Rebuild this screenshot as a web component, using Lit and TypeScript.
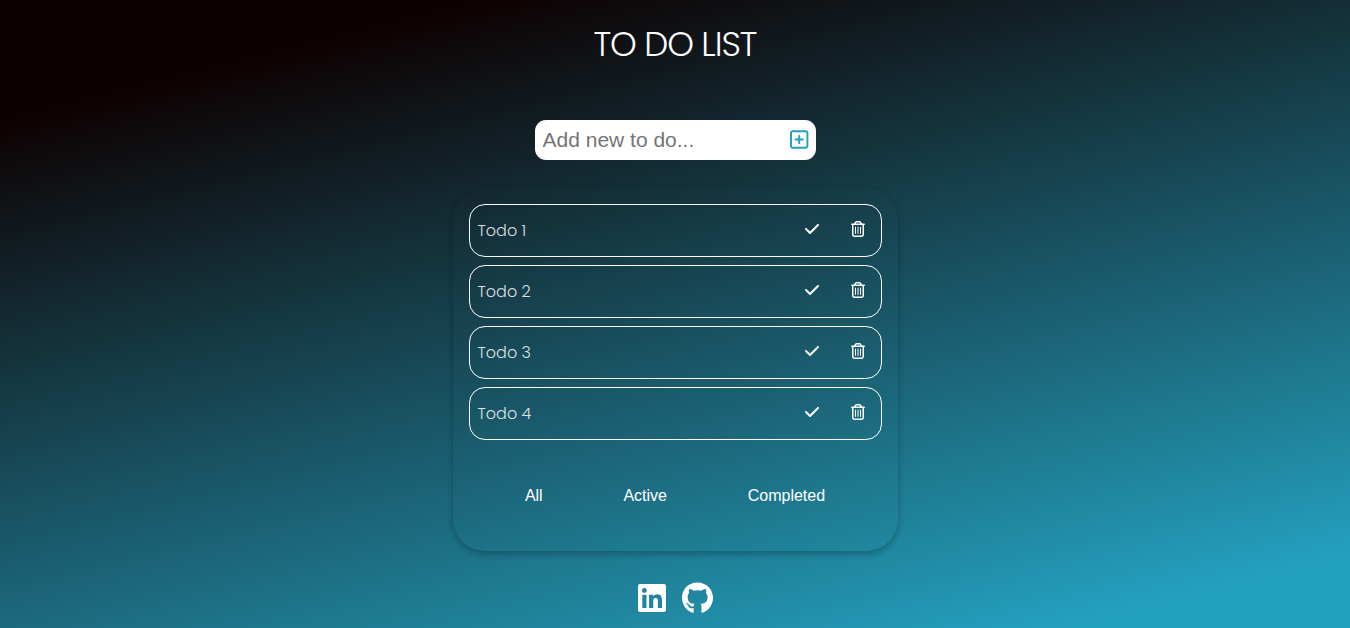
import { LitElement, html, css, svg } from "lit";
import { customElement, state } from "lit/decorators.js";

const icon = (width: number, path: string) => html`
  <svg class="icon" viewBox="0 0 ${width} 512" aria-hidden="true">${svg`<path d=${path}></path>`}</svg>
`;

const PLUS =
  "M64 80c-8.8 0-16 7.2-16 16V416c0 8.8 7.2 16 16 16H384c8.8 0 16-7.2 16-16V96c0-8.8-7.2-16-16-16H64zM0 96C0 60.7 28.7 32 64 32H384c35.3 0 64 28.7 64 64V416c0 35.3-28.7 64-64 64H64c-35.3 0-64-28.7-64-64V96zM200 344V280H136c-13.3 0-24-10.7-24-24s10.7-24 24-24h64V168c0-13.3 10.7-24 24-24s24 10.7 24 24v64h64c13.3 0 24 10.7 24 24s-10.7 24-24 24H248v64c0 13.3-10.7 24-24 24s-24-10.7-24-24z";
const CHECK =
  "M470.6 105.4c12.5 12.5 12.5 32.8 0 45.3l-256 256c-12.5 12.5-32.8 12.5-45.3 0l-128-128c-12.5-12.5-12.5-32.8 0-45.3s32.8-12.5 45.3 0L192 338.7 425.4 105.4c12.5-12.5 32.8-12.5 45.3 0z";
const TRASH =
  "M170.5 51.6L151.5 80h145l-19-28.4c-1.5-2.2-4-3.6-6.7-3.6H177.1c-2.7 0-5.2 1.3-6.7 3.6zm147-26.6L354.2 80H368h48 8c13.3 0 24 10.7 24 24s-10.7 24-24 24h-8V432c0 44.2-35.8 80-80 80H112c-44.2 0-80-35.8-80-80V128H24c-13.3 0-24-10.7-24-24S10.7 80 24 80h8H80 93.8l36.7-55.1C140.9 9.4 158.4 0 177.1 0h93.7c18.7 0 36.2 9.4 46.6 24.9zM80 128V432c0 17.7 14.3 32 32 32H336c17.7 0 32-14.3 32-32V128H80zm80 64V400c0 8.8-7.2 16-16 16s-16-7.2-16-16V192c0-8.8 7.2-16 16-16s16 7.2 16 16zm80 0V400c0 8.8-7.2 16-16 16s-16-7.2-16-16V192c0-8.8 7.2-16 16-16s16 7.2 16 16zm80 0V400c0 8.8-7.2 16-16 16s-16-7.2-16-16V192c0-8.8 7.2-16 16-16s16 7.2 16 16z";
const LINKEDIN =
  "M416 32H31.9C14.3 32 0 46.5 0 64.3v383.4C0 465.5 14.3 480 31.9 480H416c17.6 0 32-14.5 32-32.3V64.3c0-17.8-14.4-32.3-32-32.3zM135.4 416H69V202.2h66.5V416zm-33.2-243c-21.3 0-38.5-17.3-38.5-38.5S80.9 96 102.2 96c21.2 0 38.5 17.3 38.5 38.5 0 21.3-17.2 38.5-38.5 38.5zm282.1 243h-66.4V312c0-24.8-.5-56.7-34.5-56.7-34.6 0-39.9 27-39.9 54.9V416h-66.4V202.2h63.7v29.2h.9c8.9-16.8 30.6-34.5 62.9-34.5 67.2 0 79.7 44.3 79.7 101.9V416z";
const GITHUB =
  "M165.9 397.4c0 2-2.3 3.6-5.2 3.6-3.3.3-5.6-1.3-5.6-3.6 0-2 2.3-3.6 5.2-3.6 3-.3 5.6 1.3 5.6 3.6zm-31.1-4.5c-.7 2 1.3 4.3 4.3 4.9 2.6 1 5.6 0 6.2-2s-1.3-4.3-4.3-5.2c-2.6-.7-5.5.3-6.2 2.3zm44.2-1.7c-2.9.7-4.9 2.6-4.6 4.9.3 2 2.9 3.3 5.9 2.6 2.9-.7 4.9-2.6 4.6-4.6-.3-1.9-3-3.2-5.9-2.9zM244.8 8C106.1 8 0 113.3 0 252c0 110.9 69.8 205.8 169.5 239.2 12.8 2.3 17.3-5.6 17.3-12.1 0-6.2-.3-40.4-.3-61.4 0 0-70 15-84.7-29.8 0 0-11.4-29.1-27.8-36.6 0 0-22.9-15.7 1.6-15.4 0 0 24.9 2 38.6 25.8 21.9 38.6 58.6 27.5 72.9 20.9 2.3-16 8.8-27.1 16-33.7-55.9-6.2-112.3-14.3-112.3-110.5 0-27.5 7.6-41.3 23.6-58.9-2.6-6.5-11.1-33.3 2.6-67.9 20.9-6.5 69 27 69 27 20-5.6 41.5-8.5 62.8-8.5s42.8 2.9 62.8 8.5c0 0 48.1-33.6 69-27 13.7 34.7 5.2 61.4 2.6 67.9 16 17.7 25.8 31.5 25.8 58.9 0 96.5-58.9 104.2-114.8 110.5 9.2 7.9 17 22.9 17 46.4 0 33.7-.3 75.4-.3 83.6 0 6.5 4.6 14.4 17.3 12.1C428.2 457.8 496 362.9 496 252 496 113.3 383.5 8 244.8 8zM97.2 352.9c-1.3 1-1 3.3.7 5.2 1.6 1.6 3.9 2.3 5.2 1 1.3-1 1-3.3-.7-5.2-1.6-1.6-3.9-2.3-5.2-1z";

interface Todo {
  id: number;
  title: string;
  completed: boolean;
}

type Filter = "All" | "Active" | "Completed";

@customElement("app-root")
export class AppRoot extends LitElement {
  static styles = css`
    :host {
      display: block;
      font-family: Poppins, Lato, sans-serif;
      color: #fff;
    }
    .page {
      box-sizing: border-box;
      min-height: 100vh;
      display: flex;
      flex-direction: column;
      align-items: center;
      padding: 16px 0 14px;
      background: linear-gradient(166deg, rgb(13, 0, 0) 12%, rgb(36, 161, 191) 93%);
    }
    .title {
      margin: 0 0 48px;
      font-size: 34px;
      line-height: 56px;
      font-weight: 300;
      letter-spacing: -1px;
    }
    .entry {
      box-sizing: border-box;
      display: flex;
      align-items: center;
      width: 281px;
      max-width: 100%;
      height: 40px;
      margin-bottom: 28px;
      padding: 0 7px 0 8px;
      border-radius: 11px;
      background: #fff;
    }
    .entry-input {
      flex: 1;
      min-width: 0;
      padding: 0;
      border: 0;
      outline: 0;
      background: none;
      font: 21px/24px "Liberation Sans", Arial, sans-serif;
      color: #222;
    }
    .entry-input::placeholder {
      color: #757575;
    }
    button {
      display: flex;
      align-items: center;
      justify-content: center;
      border: 0;
      background: none;
      color: inherit;
      cursor: pointer;
    }
    .icon {
      display: block;
      height: 16px;
      fill: currentColor;
    }
    .add {
      padding: 0;
      margin-bottom: 2px;
      color: #24a1bf;
    }
    .add .icon {
      height: 21px;
    }
    .card {
      box-sizing: border-box;
      width: 445px;
      max-width: 100%;
      padding: 16px 16px 43px;
      border-radius: 32px;
      box-shadow: 0 3px 6px rgba(0, 0, 0, 0.16), 0 3px 6px rgba(0, 0, 0, 0.1);
    }
    .list {
      display: grid;
      gap: 8px;
      margin: 0 0 44px;
      padding: 0;
      list-style: none;
    }
    .item {
      display: flex;
      align-items: stretch;
      border: 1px solid #fff;
      border-radius: 16px;
      padding-left: 8px;
    }
    .item-title {
      flex: 1;
      font-size: 16px;
      line-height: 51px;
      font-weight: 300;
      color: rgba(255, 255, 255, 0.85);
    }
    .done .item-title {
      text-decoration: line-through;
    }
    .action {
      width: 46px;
      padding: 0 0 3px;
    }
    .filters {
      display: flex;
      justify-content: space-around;
      padding: 0 16px;
    }
    .filter {
      padding: 0;
      font: 16px/24px "Liberation Sans", Arial, sans-serif;
    }
    .social {
      display: flex;
      gap: 16px;
      margin-top: 31px;
    }
    .social-link {
      color: #fff;
    }
    .social .icon {
      height: 32px;
    }
  `;

  @state() private todos: Todo[] = [1, 2, 3, 4].map((id) => ({
    id,
    title: `Todo ${id}`,
    completed: false,
  }));
  @state() private filter: Filter = "All";

  private add(event: Event) {
    event.preventDefault();
    const input = this.renderRoot.querySelector<HTMLInputElement>("#new-todo")!;
    const title = input.value.trim();
    if (!title) return;
    this.todos = [...this.todos, { id: Date.now(), title, completed: false }];
    input.value = "";
  }

  private toggle(id: number) {
    this.todos = this.todos.map((t) => (t.id === id ? { ...t, completed: !t.completed } : t));
  }

  private remove(id: number) {
    this.todos = this.todos.filter((t) => t.id !== id);
  }

  render() {
    const shown = this.todos.filter(
      (t) => this.filter === "All" || t.completed === (this.filter === "Completed")
    );
    const filters: Filter[] = ["All", "Active", "Completed"];
    return html`
      <main class="page">
        <h1 class="title">TO DO LIST</h1>
        <form class="entry" @submit=${this.add}>
          <input id="new-todo" class="entry-input" type="text" aria-label="New to do" placeholder="Add new to do..." />
          <button class="add" type="submit" aria-label="Add">${icon(448, PLUS)}</button>
        </form>
        <section class="card">
          <ul class="list">
            ${shown.map(
              (t) => html`
                <li class="item ${t.completed ? "done" : ""}">
                  <span class="item-title">${t.title}</span>
                  <button class="action" type="button" aria-label="Complete" @click=${() => this.toggle(t.id)}>
                    ${icon(512, CHECK)}
                  </button>
                  <button class="action" type="button" aria-label="Delete" @click=${() => this.remove(t.id)}>
                    ${icon(448, TRASH)}
                  </button>
                </li>
              `
            )}
          </ul>
          <div class="filters">
            ${filters.map(
              (f) => html`<button class="filter" type="button" @click=${() => (this.filter = f)}>${f}</button>`
            )}
          </div>
        </section>
        <footer class="social">
          <a class="social-link" href="#linkedin" aria-label="LinkedIn">${icon(448, LINKEDIN)}</a>
          <a class="social-link" href="#github" aria-label="GitHub">${icon(496, GITHUB)}</a>
        </footer>
      </main>
    `;
  }
}
